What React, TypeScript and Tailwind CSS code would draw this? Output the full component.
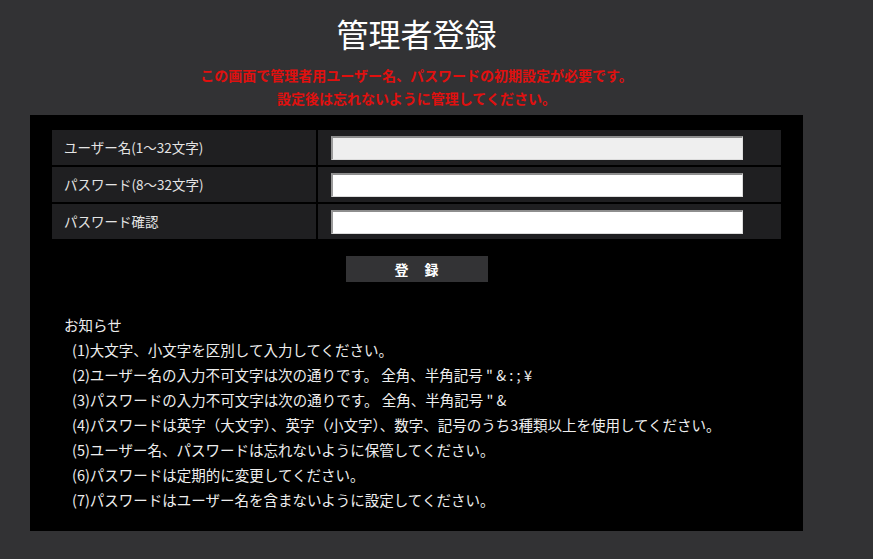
const notes = [
  '(1)大文字、小文字を区別して入力してください。',
  '(2)ユーザー名の入力不可文字は次の通りです。 全角、半角記号 " & : ; ¥',
  '(3)パスワードの入力不可文字は次の通りです。 全角、半角記号 " &',
  '(4)パスワードは英字（大文字）、英字（小文字）、数字、記号のうち3種類以上を使用してください。',
  '(5)ユーザー名、パスワードは忘れないように保管してください。',
  '(6)パスワードは定期的に変更してください。',
  '(7)パスワードはユーザー名を含まないように設定してください。',
];

const fields: [string, string, string][] = [
  ['user', 'ユーザー名(1～32文字)', 'bg-[#efefef]'],
  ['pass', 'パスワード(8～32文字)', 'bg-white'],
  ['confirm', 'パスワード確認', 'bg-white'],
];

export default function App() {
  return (
    <div className="min-h-[559px] w-full bg-[#323234] font-['Noto_Sans_CJK_JP','Noto_Sans',sans-serif]">
      <div className="ml-[30px] w-[773px]">
        <h1 className="pt-[13px] text-center text-[32px] font-normal leading-[40px] text-white">管理者登録</h1>
        <div className="mt-[11px] text-center text-[14px] font-bold leading-[23px] text-[#e0100f]">
          <p>この画面で管理者用ユーザー名、パスワードの初期設定が必要です。</p>
          <p>設定後は忘れないように管理してください。</p>
        </div>
      </div>

      <div className="ml-[30px] mt-[5px] w-[773px] bg-black px-[22px] pt-[15px] pb-[19px]">
        <div className="flex flex-col gap-[2px]">
          {fields.map(([id, label, bg]) => (
            <div key={id} className="flex h-[35px] gap-[2px]">
              <div className="flex w-[264px] items-center bg-[#1f1f21] pl-[12px] text-[13.5px] text-[#e4e4e4]">
                {label}
              </div>
              <div className="flex flex-1 items-center bg-[#1f1f21] pl-[13px]">
                <input
                  type={id === 'user' ? 'text' : 'password'}
                  className={`h-[24px] w-[412px] border-t-2 border-l-2 border-r border-b border-t-[#8e8e8e] border-l-[#9a9a9a] border-r-[#dcdcdc] border-b-[#dcdcdc] outline-none ${bg}`}
                />
              </div>
            </div>
          ))}
        </div>

        <div className="mt-[17px] flex justify-center">
          <button className="flex h-[26px] w-[142px] items-center justify-center gap-[16px] bg-[#333335] text-[14px] font-bold text-white">
            <span>登</span>
            <span>録</span>
          </button>
        </div>

        <div className="mt-[30px] pl-[12px] text-[14.5px] leading-[25px] text-[#eeeeee]">
          <p>お知らせ</p>
          {notes.map((n) => (
            <p key={n} className="pl-[8px]">
              {n}
            </p>
          ))}
        </div>
      </div>
    </div>
  );
}
